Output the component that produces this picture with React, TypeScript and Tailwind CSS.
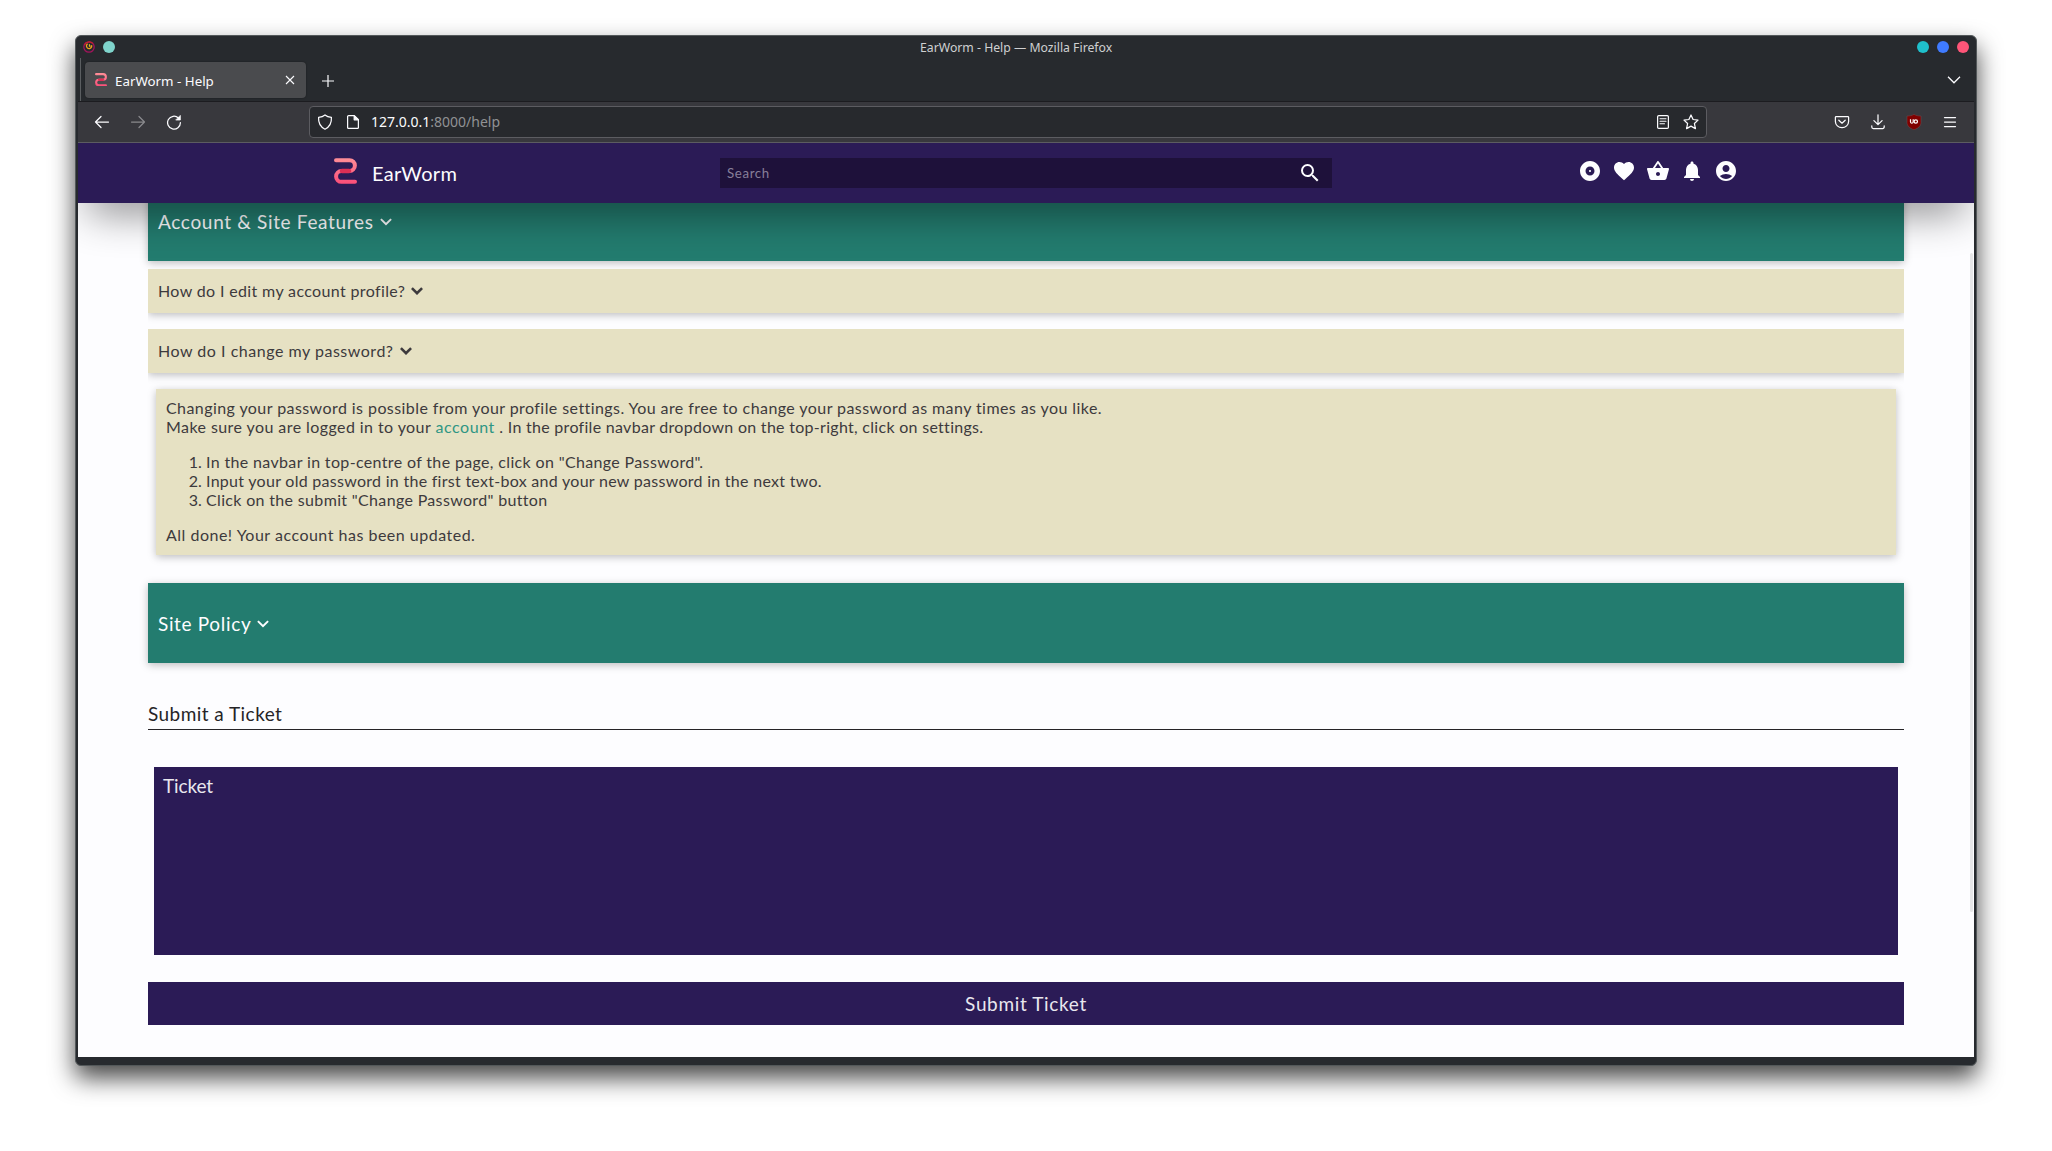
import type { ReactNode } from "react";
import {
  MdAccountCircle,
  MdAlbum,
  MdFavorite,
  MdNotifications,
  MdSearch,
  MdShoppingBasket,
} from "react-icons/md";

function Logo({ id, className }: { id: string; className: string }) {
  return (
    <svg viewBox="0 0 23 26" className={className} fill="none">
      <defs>
        <linearGradient id={id} x1="0" y1="0" x2="0" y2="26" gradientUnits="userSpaceOnUse">
          <stop offset="0" stopColor="#ff8f98" />
          <stop offset="1" stopColor="#fb4d78" />
        </linearGradient>
      </defs>
      <path
        d="M2 2.2H15.5A5.4 5.4 0 0 1 15.5 13H7.5A5.4 5.4 0 0 0 7.5 23.8H21"
        stroke={`url(#${id})`}
        strokeWidth="4"
        strokeLinecap="round"
      />
      <path d="M8 13H15" stroke="#dc2f55" strokeWidth="4.6" strokeLinecap="round" />
    </svg>
  );
}

function Chevron({ weight }: { weight: number }) {
  return (
    <svg viewBox="0 0 12 8" className="ml-1.5 h-2 w-3 shrink-0" fill="none">
      <path d="M0.9 1.1L6 6.2L11.1 1.1" stroke="currentColor" strokeWidth={weight} />
    </svg>
  );
}

function TitleBar() {
  return (
    <div className="grid h-[22px] shrink-0 grid-cols-[842px_192px_1fr] items-center">
      <div className="flex items-center gap-2 pl-[5px]">
        <svg viewBox="0 0 12 12" className="h-3 w-3" fill="none">
          <circle cx="6" cy="6" r="5.2" stroke="#a3145c" strokeWidth="1.3" />
          <path d="M1.4 4A5.2 5.2 0 0 1 9.8 2.5" stroke="#c8202f" strokeWidth="1.2" />
          <path d="M4.6 2.8A2.6 2.6 0 1 0 8.6 4.2" stroke="#f0a01c" strokeWidth="1.2" />
          <path d="M6.4 3.2V5.4L7.8 5" stroke="#f5c61c" strokeWidth="1" />
        </svg>
        <span className="h-3 w-3 rounded-full bg-[#7fd4cc]" />
      </div>
      <div className="pt-[2px] whitespace-nowrap text-[12.25px] leading-4 text-[#cfd0d1]">EarWorm - Help — Mozilla Firefox</div>
      <div className="flex items-center justify-end gap-2 pr-[5px]">
        <span className="h-3 w-3 rounded-full bg-[#1fc0cc]" />
        <span className="h-3 w-3 rounded-full bg-[#3f7bff]" />
        <span className="h-3 w-3 rounded-full bg-[#ff5578]" />
      </div>
    </div>
  );
}

function TabStrip() {
  return (
    <div className="flex h-11 shrink-0 items-center border-b border-[#1c1c20] pl-[2px] text-[#fbfbfe]">
      <div className="h-full w-px bg-[#5b5e61]" />
      <div className="ml-1 mt-[1px] flex h-9 w-[221px] items-center rounded bg-[#4a4b4e] pl-[10px] pr-[11px] shadow-[0_0_2px_rgba(0,0,0,0.4)]">
        <Logo id="tab-logo" className="mb-[1px] h-[13.5px] w-3" />
        <span className="ml-2 pt-[2px] whitespace-nowrap text-[13.33px] leading-5">EarWorm - Help</span>
        <svg viewBox="0 0 10 10" className="mb-px ml-auto h-[10px] w-[10px]" stroke="currentColor" strokeWidth="1.1">
          <path d="M1 1L9 9M9 1L1 9" />
        </svg>
      </div>
      <svg viewBox="0 0 12 12" className="mt-[2px] ml-4 h-3 w-3" stroke="currentColor" strokeWidth="1.2">
        <path d="M6 0V12M0 6H12" />
      </svg>
      <svg viewBox="0 0 14 8" className="mt-px ml-auto mr-[13px] h-2 w-[14px]" fill="none" stroke="currentColor" strokeWidth="1.3">
        <path d="M1 0.8L7 6.8L13 0.8" />
      </svg>
    </div>
  );
}

function ToolIcon({ className, children }: { className?: string; children: ReactNode }) {
  return (
    <svg
      viewBox="0 0 16 16"
      className={`h-4 w-4 shrink-0 ${className ?? ""}`}
      fill="none"
      stroke="currentColor"
      strokeWidth="1.25"
      strokeLinecap="round"
      strokeLinejoin="round"
    >
      {children}
    </svg>
  );
}

function Toolbar() {
  return (
    <div className="flex h-[41px] shrink-0 items-center border-b border-[#5c5c61] bg-[#38383d] text-[#fbfbfe]">
      <div className="flex w-[231px] items-center gap-5 pl-4">
        <ToolIcon>
          <path d="M14.5 8H1.5M7 2.5L1.5 8L7 13.5" />
        </ToolIcon>
        <ToolIcon className="text-[#89898c]">
          <path d="M1.5 8H14.5M9 2.5L14.5 8L9 13.5" />
        </ToolIcon>
        <ToolIcon>
          <path d="M14.4 8.6A6.4 6.4 0 1 1 12.4 4" />
          <path d="M14.3 1.8V6H10.1Z" fill="currentColor" strokeWidth="0.8" />
        </ToolIcon>
      </div>
      <div className="flex h-8 w-[1398px] items-center rounded border border-[#5c5c61] bg-[#27292d] pl-[7px] pr-[7px]">
        <ToolIcon>
          <path d="M8 0.9C10 2.5 12 3 14.4 3.3C14.8 9 12.5 13 8 15.2C3.5 13 1.2 9 1.6 3.3C4 3 6 2.5 8 0.9Z" />
        </ToolIcon>
        <ToolIcon className="ml-3">
          <path d="M3.6 1.6H9.2L13.4 5.8V13.4A1 1 0 0 1 12.4 14.4H3.6A1 1 0 0 1 2.6 13.4V2.6A1 1 0 0 1 3.6 1.6Z" />
          <path d="M9.2 1.8V5.8H13.2Z" fill="currentColor" />
        </ToolIcon>
        <div className="ml-[10px] text-[14px] leading-5">
          127.0.0.1<span className="text-[#909194]">:8000/help</span>
        </div>
        <ToolIcon className="ml-auto">
          <rect x="2.6" y="1.6" width="10.8" height="12.8" rx="1.2" />
          <path d="M5 4.8H11M5 7.3H11M5 9.8H9.5" strokeWidth="1.1" />
        </ToolIcon>
        <ToolIcon className="ml-3">
          <path d="M8 1L10.1 5.5L15 6.1L11.4 9.5L12.4 14.6L8 12.1L3.6 14.6L4.6 9.5L1 6.1L5.9 5.5Z" />
        </ToolIcon>
      </div>
      <div className="ml-auto flex items-center gap-5 pr-4">
        <ToolIcon>
          <path d="M2.2 2.5H13.8A0.8 0.8 0 0 1 14.6 3.3V7.5A6.6 6.2 0 0 1 1.4 7.5V3.3A0.8 0.8 0 0 1 2.2 2.5Z" />
          <path d="M4.8 6.2L8 9.2L11.2 6.2" />
        </ToolIcon>
        <ToolIcon>
          <path d="M8 0.8V10.4M3.9 6.6L8 10.6L12.1 6.6M1.8 11.8V13A1.5 1.5 0 0 0 3.3 14.5H12.7A1.5 1.5 0 0 0 14.2 13V11.8" />
        </ToolIcon>
        <svg viewBox="0 0 16 16" className="h-4 w-4" fill="none">
          <path
            d="M8 0.3C10 1.6 12 2 15 2V8.5C15 12 12 14.4 8 15.8C4 14.4 1 12 1 8.5V2C4 2 6 1.6 8 0.3Z"
            fill="#800000"
            stroke="#6b5257"
            strokeWidth="0.5"
          />
          <path d="M4.5 5.3V8.2A1.4 1.4 0 0 0 7.2 8.2V5.3" stroke="white" strokeWidth="1.2" />
          <circle cx="9.8" cy="7.5" r="1.7" stroke="white" strokeWidth="1.2" />
        </svg>
        <ToolIcon>
          <path d="M2.5 3.5H13.5M2.5 8H13.5M2.5 12.5H13.5" />
        </ToolIcon>
      </div>
    </div>
  );
}

function SiteNav() {
  return (
    <nav className="relative z-10 flex h-[60px] shrink-0 items-center bg-[#2b1b56] pl-[256px] text-[#fdfdff] shadow-[0_20px_40px_-10px_rgba(0,0,0,0.46)]">
      <Logo id="nav-logo" className="mb-1 h-[26px] w-[23px]" />
      <div className="ml-[15px] w-[348px] text-[20px] leading-6 tracking-[0.3px]">EarWorm</div>
      <div className="flex h-[30px] w-[612px] items-center justify-between bg-[#1e113a] pl-[7px] pr-[10px]">
        <span className="pt-[2px] text-[13.33px] tracking-[0.6px] text-[#877f99]">Search</span>
        <MdSearch className="h-6 w-6" />
      </div>
      <div className="mb-1 ml-[246px] flex items-center gap-[10px]">
        <MdAlbum className="h-6 w-6" />
        <MdFavorite className="h-6 w-6" />
        <MdShoppingBasket className="h-6 w-6" />
        <MdNotifications className="h-6 w-6" />
        <MdAccountCircle className="h-6 w-6" />
      </div>
    </nav>
  );
}

function SectionHeader({ children }: { children: ReactNode }) {
  return (
    <div className="flex h-20 items-center bg-[#237c6f] pl-[10px] pt-[2px] text-[19px] leading-6 tracking-[0.67px] text-[#fdfdff] shadow-[0_2px_8px_rgba(0,0,0,0.26)]">
      <span>{children}</span>
      <Chevron weight={2} />
    </div>
  );
}

function Question({ children }: { children: ReactNode }) {
  return (
    <div className="flex h-11 items-center bg-[#e6e1c3] pl-[10px] shadow-[0_2px_8px_rgba(0,0,0,0.26)] [clip-path:inset(0_0_-14px_0)]">
      {children}
      <Chevron weight={2.6} />
    </div>
  );
}

function Answer() {
  return (
    <div className="mx-2 mt-4 bg-[#e6e1c3] px-[10px] pb-[11px] pt-[9px] leading-[19px] shadow-[0_2px_8px_rgba(0,0,0,0.26)]">
      <p className="tracking-[0.425px]">
        Changing your password is possible from your profile settings. You are free to change your password as many times as you like.
        <br />
        Make sure you are logged in to your <a className="tracking-[0.57px] text-[#2f9683]">account</a>
        <span className="tracking-[0.29px]"> . In the profile navbar dropdown on the top-right, click on settings.</span>
      </p>
      <ol className="my-4 list-decimal pl-10">
        <li>
          <span className="tracking-[0.35px]">In the navbar in top-centre of the page, click on "Change Password".</span>
        </li>
        <li>
          <span className="tracking-[0.28px]">Input your old password in the first text-box and your new password in the next two.</span>
        </li>
        <li>
          <span className="tracking-[0.335px]">Click on the submit "Change Password" button</span>
        </li>
      </ol>
      <p className="tracking-[0.5px]">All done! Your account has been updated.</p>
    </div>
  );
}

function HelpPage() {
  return (
    <div className="relative flex min-h-0 flex-1 flex-col overflow-hidden bg-[#fdfdff] font-['Lato',sans-serif] text-[16px] text-[#3d3a3d]">
      <SiteNav />
      <main className="-mt-[22px] px-[70px]">
        <SectionHeader>Account &amp; Site Features</SectionHeader>
        <div className="pt-2">
          <Question>
            <span className="tracking-[0.36px]">How do I edit my account profile?</span>
          </Question>
        </div>
        <div className="pt-4">
          <Question>
            <span className="tracking-[0.52px]">How do I change my password?</span>
          </Question>
        </div>
        <Answer />
        <div className="pt-7">
          <SectionHeader>Site Policy</SectionHeader>
        </div>
        <h3 className="mt-[39px] border-b border-[#262427] pb-[3px] text-[19px] leading-6 tracking-[0.45px] text-[#262427]">
          Submit a Ticket
        </h3>
        <div className="mx-1.5 mt-[37px] h-[188px] bg-[#2b1b56] px-[9px] pt-[7px] text-[19px] leading-6 tracking-[-0.1px] text-[#e9e7ee]">
          Ticket
        </div>
        <button className="mt-[27px] block h-[43px] w-full bg-[#2b1b56] text-[19px] leading-6 tracking-[0.65px] text-[#e9e7ee]">
          Submit Ticket
        </button>
      </main>
      <div className="absolute right-[1px] top-[110px] h-[659px] w-[3px] rounded-full bg-[#e6e6e7]" />
    </div>
  );
}

export default function App() {
  return (
    <div className="h-[1151px] w-[2052px] overflow-hidden bg-white pl-[75px] pt-[35px] font-['Noto_Sans',sans-serif]">
      <div className="flex h-[1031px] w-[1902px] flex-col overflow-hidden rounded-md border border-[#53585a] bg-[#272a2e] px-[2px] pb-2 shadow-[0_12px_24px_rgba(0,0,0,0.72)]">
        <TitleBar />
        <TabStrip />
        <Toolbar />
        <HelpPage />
      </div>
    </div>
  );
}
